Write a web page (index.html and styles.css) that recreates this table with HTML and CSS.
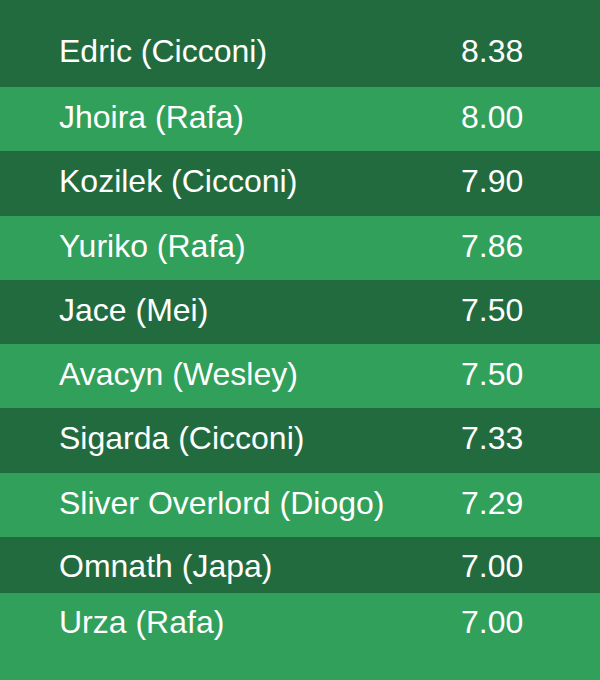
FILE: index.html
```html
<!DOCTYPE html>
<html>
<head>
<meta charset="utf-8">
<link rel="stylesheet" href="styles.css">
</head>
<body>
<div class="list">
  <div class="row dark first"><span class="name">Edric (Cicconi)</span><span class="score">8.38</span></div>
  <div class="row light"><span class="name">Jhoira (Rafa)</span><span class="score">8.00</span></div>
  <div class="row dark"><span class="name">Kozilek (Cicconi)</span><span class="score">7.90</span></div>
  <div class="row light"><span class="name">Yuriko (Rafa)</span><span class="score">7.86</span></div>
  <div class="row dark"><span class="name">Jace (Mei)</span><span class="score">7.50</span></div>
  <div class="row light"><span class="name">Avacyn (Wesley)</span><span class="score">7.50</span></div>
  <div class="row dark"><span class="name">Sigarda (Cicconi)</span><span class="score">7.33</span></div>
  <div class="row light"><span class="name">Sliver Overlord (Diogo)</span><span class="score">7.29</span></div>
  <div class="row dark short"><span class="name">Omnath (Japa)</span><span class="score">7.00</span></div>
  <div class="row light last"><span class="name">Urza (Rafa)</span><span class="score">7.00</span></div>
</div>
</body>
</html>
```
FILE: styles.css
```css
html, body {
  margin: 0;
  padding: 0;
  background: #31a05b;
}
body {
  width: 600px;
  height: 680px;
  overflow: hidden;
  font-family: "Liberation Sans", Arial, sans-serif;
  color: #ffffff;
}
.list {
  display: flex;
  flex-direction: column;
}
.row {
  display: grid;
  grid-template-columns: 402px auto;
  padding: 11px 0 0 59px;
  box-sizing: border-box;
  height: 64.29px;
  font-size: 32px;
  line-height: 38px;
}
.dark { background: #226b3e; }
.light { background: #31a05b; }
.first {
  height: 87px;
  padding-top: 32px;
}
.short {
  height: 56px;
  padding-top: 10px;
}
.last {
  padding-top: 10px;
}
```
